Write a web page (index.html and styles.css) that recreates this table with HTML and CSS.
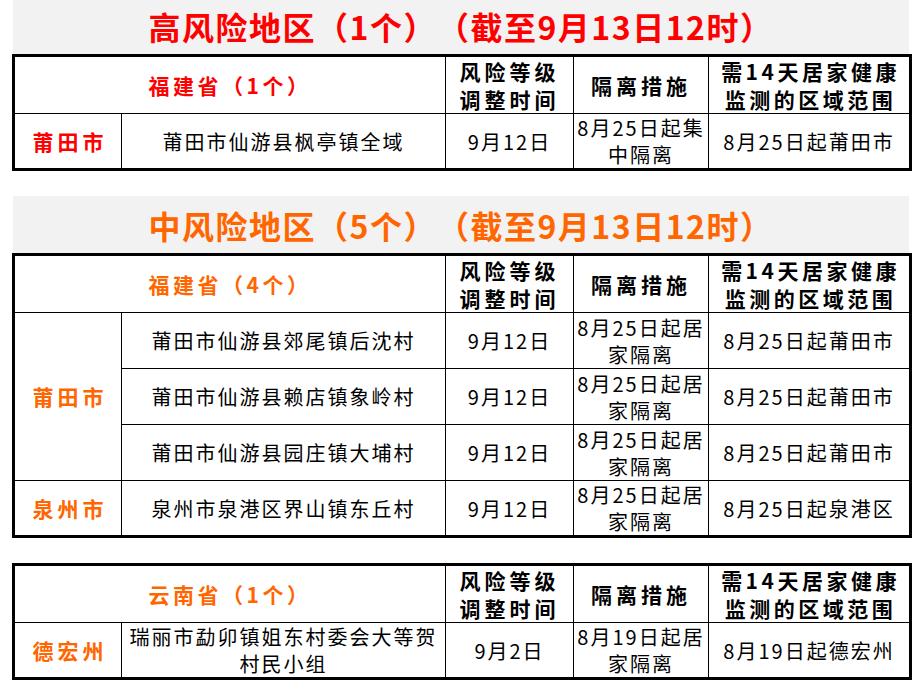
FILE: index.html
```html
<!DOCTYPE html>
<html lang="zh-CN">
<head>
<meta charset="utf-8">
<title>风险地区</title>
<link rel="stylesheet" href="styles.css">
</head>
<body>
<div class="page">
  <section class="region">
    <h1 class="banner banner-first high">高风险地区（1个）（截至9月13日12时）</h1>
    <table class="risk">
      <colgroup><col class="c1"><col class="c2"><col class="c3"><col class="c4"><col class="c5"></colgroup>
      <tr class="head">
        <th colspan="2" class="prov high">福建省（1个）</th>
        <th>风险等级<br>调整时间</th>
        <th>隔离措施</th>
        <th class="wide">需14天居家健康<br>监测的区域范围</th>
      </tr>
      <tr>
        <td class="city high">莆田市</td>
        <td>莆田市仙游县枫亭镇全域</td>
        <td>9月12日</td>
        <td>8月25日起集<br>中隔离</td>
        <td>8月25日起莆田市</td>
      </tr>
    </table>
  </section>

  <section class="region">
    <h1 class="banner mid">中风险地区（5个）（截至9月13日12时）</h1>
    <table class="risk">
      <colgroup><col class="c1"><col class="c2"><col class="c3"><col class="c4"><col class="c5"></colgroup>
      <tr class="head">
        <th colspan="2" class="prov mid">福建省（4个）</th>
        <th>风险等级<br>调整时间</th>
        <th>隔离措施</th>
        <th class="wide">需14天居家健康<br>监测的区域范围</th>
      </tr>
      <tr>
        <td rowspan="3" class="city mid">莆田市</td>
        <td>莆田市仙游县郊尾镇后沈村</td>
        <td>9月12日</td>
        <td>8月25日起居<br>家隔离</td>
        <td>8月25日起莆田市</td>
      </tr>
      <tr>
        <td>莆田市仙游县赖店镇象岭村</td>
        <td>9月12日</td>
        <td>8月25日起居<br>家隔离</td>
        <td>8月25日起莆田市</td>
      </tr>
      <tr>
        <td>莆田市仙游县园庄镇大埔村</td>
        <td>9月12日</td>
        <td>8月25日起居<br>家隔离</td>
        <td>8月25日起莆田市</td>
      </tr>
      <tr>
        <td class="city mid">泉州市</td>
        <td>泉州市泉港区界山镇东丘村</td>
        <td>9月12日</td>
        <td>8月25日起居<br>家隔离</td>
        <td>8月25日起泉港区</td>
      </tr>
    </table>
  </section>

  <section class="region">
    <table class="risk">
      <colgroup><col class="c1"><col class="c2"><col class="c3"><col class="c4"><col class="c5"></colgroup>
      <tr class="head">
        <th colspan="2" class="prov mid">云南省（1个）</th>
        <th>风险等级<br>调整时间</th>
        <th>隔离措施</th>
        <th class="wide">需14天居家健康<br>监测的区域范围</th>
      </tr>
      <tr>
        <td class="city mid">德宏州</td>
        <td>瑞丽市勐卯镇姐东村委会大等贺<br>村民小组</td>
        <td>9月2日</td>
        <td>8月19日起居<br>家隔离</td>
        <td>8月19日起德宏州</td>
      </tr>
    </table>
  </section>
</div>
</body>
</html>
```

FILE: styles.css
```css
html, body {
  margin: 0;
  padding: 0;
  background: #ffffff;
}

body {
  font-family: "Noto Sans CJK SC", "Noto Sans", sans-serif;
  color: #000;
  text-spacing-trim: space-all;
}

.page {
  padding: 0 12px;
  width: 897px;
}

.region {
  margin-bottom: 25px;
}

.banner {
  margin: 0 0 0 1px;
  height: 57px;
  background: #f2f2f2;
  display: flex;
  align-items: center;
  justify-content: center;
  font-size: 32px;
  font-weight: bold;
  letter-spacing: 1.5px;
  line-height: 1;
}

.banner-first {
  margin-top: -3px;
}

.high { color: #ff0000; }
.mid { color: #ff6600; }

.risk {
  width: 897px;
  border-collapse: collapse;
  table-layout: fixed;
  border: 3px solid #000;
}

.c1 { width: 108px; }
.c2 { width: 324px; }
.c3 { width: 128px; }
.c4 { width: 135px; }
.c5 { width: 202px; }

.risk th,
.risk td {
  border: 1px solid #000;
  padding: 0;
  text-align: center;
  vertical-align: middle;
  font-size: 20px;
  line-height: 27px;
  letter-spacing: 2px;
}

.risk tr {
  height: 56px;
}

.risk th {
  font-size: 21px;
  font-weight: bold;
  line-height: 28px;
  letter-spacing: 4px;
}

.risk th.wide {
  letter-spacing: 3.5px;
  padding-left: 3px;
}

.risk th.prov {
  letter-spacing: 3.5px;
}

.risk td.city {
  font-size: 21px;
  font-weight: bold;
  letter-spacing: 4px;
  padding-left: 4px;
}
```
